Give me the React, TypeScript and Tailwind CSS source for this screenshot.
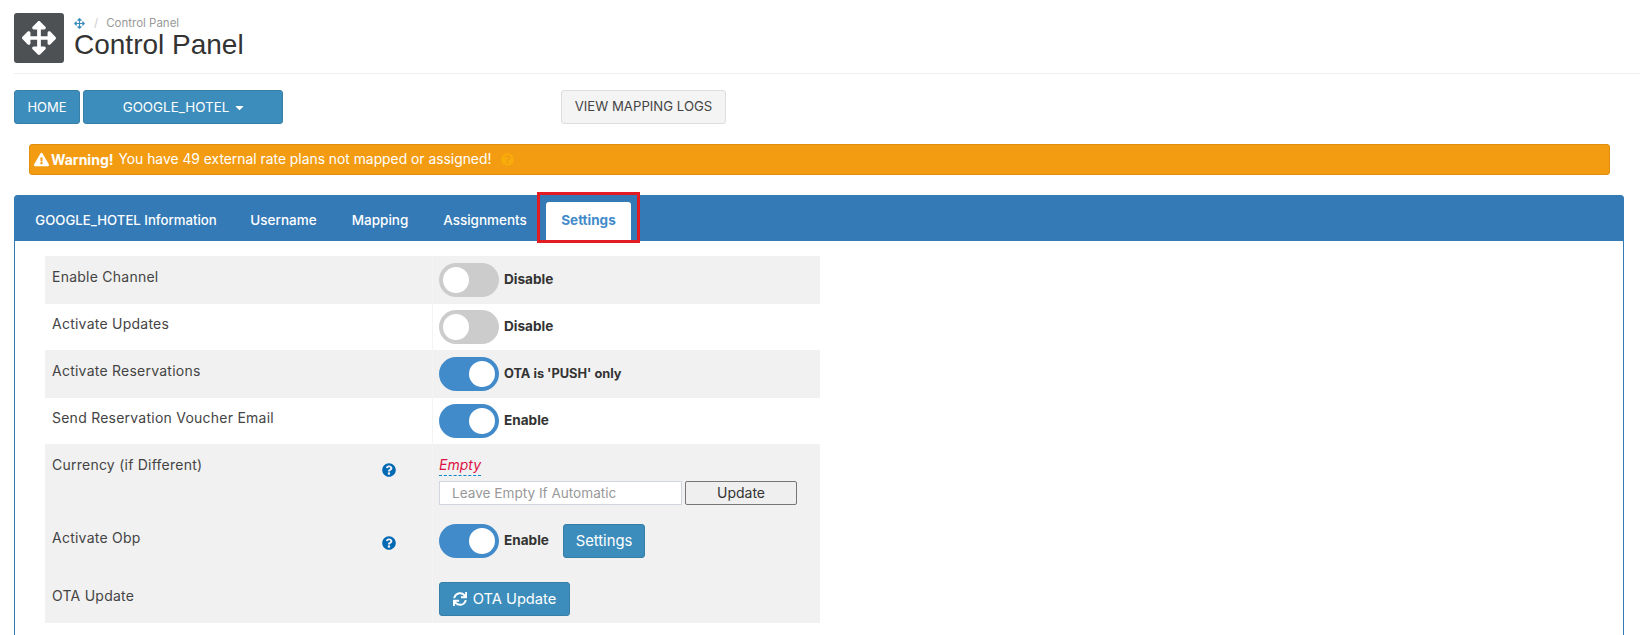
import { FaArrowsAlt, FaCaretDown, FaExclamationTriangle, FaQuestionCircle, FaSync } from 'react-icons/fa'

function Toggle({ on }: { on: boolean }) {
  return (
    <span
      className={`flex h-[34px] w-[60px] shrink-0 items-center rounded-full px-[4px] ${
        on ? 'justify-end bg-[#428bca]' : 'justify-start bg-[#cccccc]'
      }`}
    >
      <span className="h-[26px] w-[26px] rounded-full bg-white" />
    </span>
  )
}

function Row({
  label,
  height,
  gray,
  compact,
  help,
  children,
}: {
  label: string
  height: string
  gray: boolean
  compact?: boolean
  help?: boolean
  children: React.ReactNode
}) {
  return (
    <div className={`flex ${height} ${gray ? 'bg-[#f1f1f1]' : 'bg-white'}`}>
      <div
        className={`relative w-[388px] border-r border-[#f4f4f4] pl-[7px] text-[14px] leading-[20px] tracking-[0.24px] text-[#444444] ${
          compact ? 'pt-[10px]' : 'pt-[11px]'
        }`}
      >
        {label}
        {help && <FaQuestionCircle className="absolute left-[337px] top-[19px] text-[14px] text-[#0069b4]" />}
      </div>
      <div className={`flex-1 pl-[6px] ${compact ? 'pt-[6px]' : 'pt-[7px]'}`}>{children}</div>
    </div>
  )
}

function ToggleCell({ on, text, small }: { on: boolean; text: string; small?: boolean }) {
  return (
    <div className="flex items-center gap-[5px]">
      <Toggle on={on} />
      <b className={`pb-[1px] font-bold text-[#333333] ${small ? 'text-[12.8px]' : 'text-[13.6px]'}`}>{text}</b>
    </div>
  )
}

export default function App() {
  return (
    <div className="h-[635px] w-[1640px] overflow-hidden bg-white font-[Inter,sans-serif] text-[#333333]">
      <header className="ml-[14px] flex h-[74px] gap-[10px] border-b border-[#eeeeee] pt-[13px]">
        <div className="flex h-[50px] w-[50px] items-center justify-center rounded-[3px] bg-[#4d5154]">
          <FaArrowsAlt className="text-[34px] text-white" />
        </div>
        <div>
          <div className="flex h-[18px] items-center pt-[3px] text-[11.5px] text-[#999999]">
            <FaArrowsAlt className="text-[11px] text-[#3c8dbc]" />
            <span className="ml-[9px] mr-[8px] text-[#cccccc]">/</span>
            Control Panel
          </div>
          <h1 className="font-['Liberation_Sans',sans-serif] text-[28px] leading-[28px] text-[#333333]">Control Panel</h1>
        </div>
      </header>

      <div className="ml-[14px] mt-[16px] flex h-[34px] text-[13px]">
        <button className="w-[66px] rounded-[3px] border border-[#367fa9] bg-[#3c8dbc] pt-[1px] text-white">HOME</button>
        <button className="ml-[3px] flex w-[200px] items-center justify-center gap-[4px] rounded-[3px] border border-[#367fa9] bg-[#3c8dbc] pl-[3px] pt-[1px] text-[13.4px] text-white">
          GOOGLE_HOTEL
          <FaCaretDown className="text-[13px]" />
        </button>
        <button className="ml-[278px] w-[165px] rounded-[3px] border border-[#dddddd] bg-[#f4f4f4] text-[13.2px] text-[#444444]">
          VIEW MAPPING LOGS
        </button>
      </div>

      <div className="ml-[29px] mt-[20px] flex h-[31px] w-[1581px] items-center rounded-[3px] border border-[#e08e0b] bg-[#f39c12] pb-[1px] pl-[4px] text-[13.85px] text-white">
        <FaExclamationTriangle className="text-[15px]" />
        <b className="ml-[2px] text-[14px] font-bold">Warning!</b>
        <span className="ml-[5px]">You have 49 external rate plans not mapped or assigned!</span>
        <FaQuestionCircle className="ml-[10px] text-[13px] text-[#f8ac0a]" />
      </div>

      <section className="ml-[14px] mt-[20px] w-[1610px] rounded-t-[3px] border border-[#337ab7] pb-[30px]">
        <nav className="flex h-[45px] items-end bg-[#337ab7] pl-[6px] text-[13.5px] font-medium text-white">
          <a className="mr-[2px] flex h-[39px] w-[210px] items-center justify-center pb-[2px] text-[13.2px]">
            GOOGLE_HOTEL Information
          </a>
          <a className="flex h-[39px] w-[101px] items-center justify-center pb-[2px]">Username</a>
          <a className="flex h-[39px] w-[92px] items-center justify-center pb-[2px]">Mapping</a>
          <a className="flex h-[39px] w-[118px] items-center justify-center pb-[2px]">Assignments</a>
          <a className="relative ml-[2px] flex h-[39px] w-[85px] items-center justify-center rounded-t-[3px] bg-white pb-[2px] font-bold text-[#428bca]">
            Settings
            <span className="absolute left-[-9px] top-[-10px] h-[51px] w-[103px] border-[3px] border-[#e31b23]" />
          </a>
        </nav>

        <div className="ml-[30px] mt-[15px] w-[775px]">
          <Row label="Enable Channel" height="h-[48px]" gray>
            <ToggleCell on={false} text="Disable" />
          </Row>
          <Row label="Activate Updates" height="h-[46px]" gray={false} compact>
            <ToggleCell on={false} text="Disable" />
          </Row>
          <Row label="Activate Reservations" height="h-[48px]" gray>
            <ToggleCell on small text="OTA is 'PUSH' only" />
          </Row>
          <Row label="Send Reservation Voucher Email" height="h-[46px]" gray={false} compact>
            <ToggleCell on text="Enable" />
          </Row>
          <Row label="Currency (if Different)" height="h-[73px]" gray help>
            <div className="pt-[2px] text-[14px] leading-[24px]">
              <span className="border-b border-dashed border-[#0088cc] pb-[2px] italic text-[#dd1144]">Empty</span>
            </div>
            <div className="mt-[4px] flex h-[24px] gap-[3px]">
              <input
                className="h-[24px] w-[243px] border border-[#d2d6de] bg-white pb-[1px] pl-[12px] text-[13.6px] placeholder:text-[#999999]"
                placeholder="Leave Empty If Automatic"
              />
              <button className="h-[24px] w-[112px] rounded-[2px] border border-[#767676] bg-[#efefef] pb-[1px] text-[14px] text-[#333333]">
                Update
              </button>
            </div>
          </Row>
          <Row label="Activate Obp" height="h-[58px]" gray help>
            <div className="flex items-center">
              <ToggleCell on text="Enable" />
              <button className="ml-[14px] h-[34px] w-[82px] rounded-[3px] border border-[#367fa9] bg-[#3c8dbc] text-[14.8px] text-white">
                Settings
              </button>
            </div>
          </Row>
          <Row label="OTA Update" height="h-[48px]" gray>
            <button className="flex h-[34px] w-[131px] items-center justify-center gap-[6px] rounded-[3px] border border-[#367fa9] bg-[#3c8dbc] text-[14.7px] text-white">
              <FaSync className="text-[14px]" />
              OTA Update
            </button>
          </Row>
        </div>
      </section>
    </div>
  )
}
